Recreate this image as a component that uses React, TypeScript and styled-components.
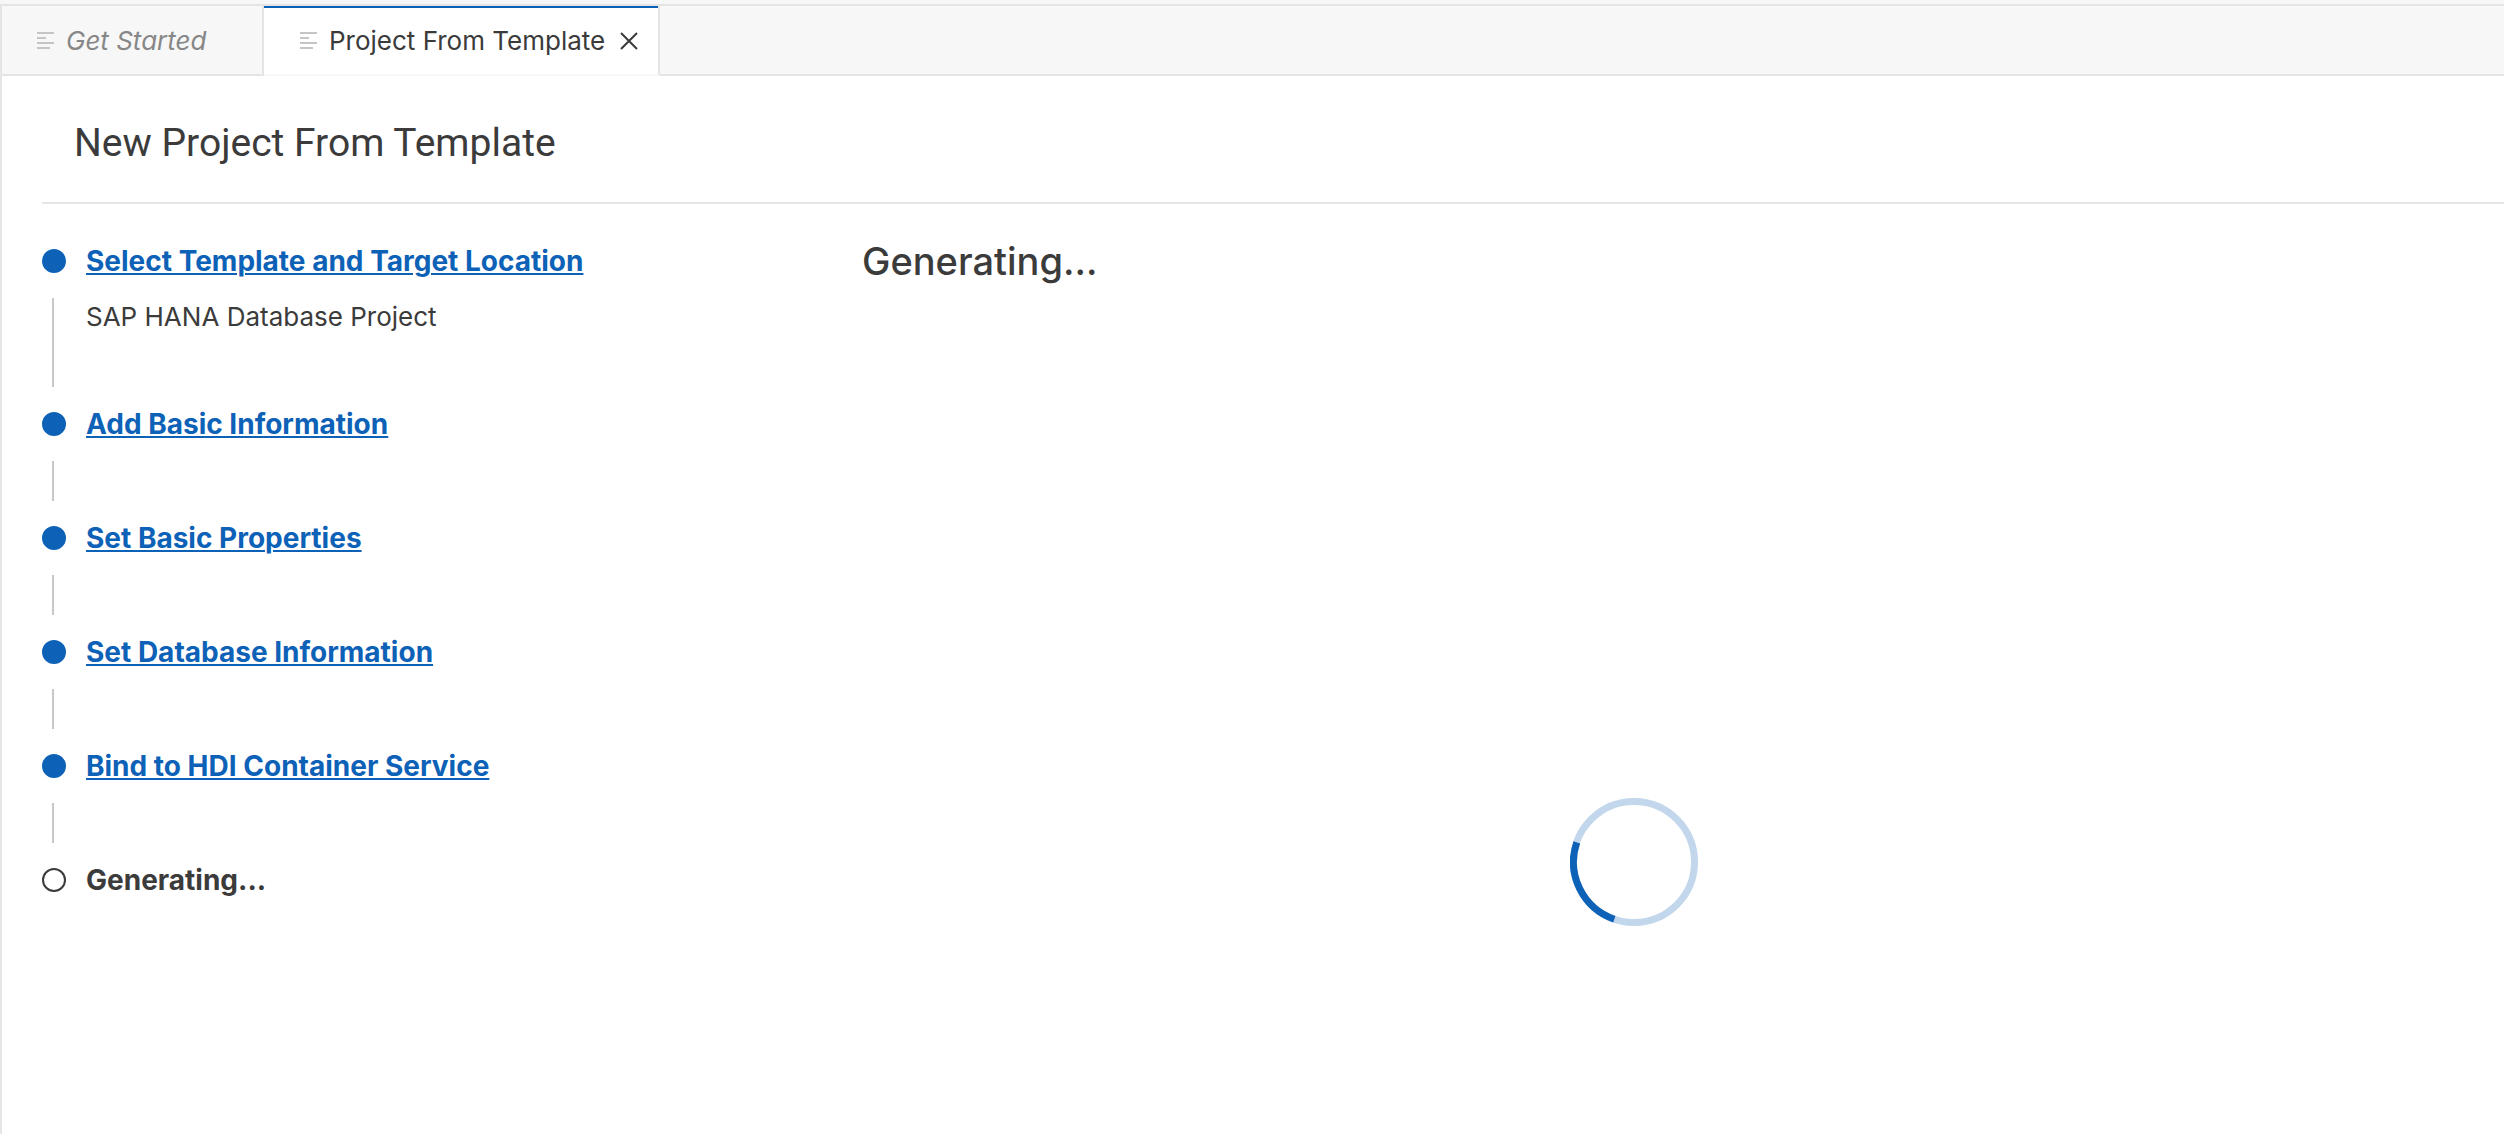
import React from "react";
import styled, { createGlobalStyle, css } from "styled-components";

const color = {
  blue: "#0d62b7",
  blueSoft: "#c2d7ec",
  text: "#3b3b3b",
  muted: "#878787",
  icon: "#c5c5c5",
  border: "#e5e5e5",
  bar: "#f7f7f7",
  line: "#c8c8c8",
};

const GlobalStyle = createGlobalStyle`
  *, *::before, *::after { box-sizing: border-box; }
  body { margin: 0; background: #fff; }
  h1, h2, p, ol { margin: 0; padding: 0; font-weight: inherit; }
`;

const Page = styled.div`
  display: flex;
  flex-direction: column;
  min-height: 100vh;
  color: ${color.text};
  font-family: Inter, "Liberation Sans", sans-serif;
`;

const TopStrip = styled.div`
  height: 4px;
  background: ${color.bar};
`;

const Panel = styled.div`
  display: flex;
  flex: 1;
  flex-direction: column;
  border-top: 2px solid ${color.border};
  border-left: 2px solid ${color.border};
`;

const TabBar = styled.div`
  display: flex;
  height: 70px;
  background: ${color.bar};
`;

const TabFiller = styled.div`
  flex: 1;
  border-bottom: 2px solid ${color.border};
`;

const TabBox = styled.div<{ $active?: boolean }>`
  display: flex;
  align-items: center;
  flex: none;
  border-right: 2px solid ${color.border};
  border-bottom: 2px solid ${color.border};
  ${({ $active }) =>
    $active
      ? css`
          width: 396px;
          padding: 2px 18px 0 36px;
          background: #fff;
          border-bottom-color: ${color.bar};
          box-shadow: inset 0 2px ${color.blue};
        `
      : css`
          width: 262px;
          padding: 2px 0 0 35px;
        `}
`;

const TabButton = styled.button<{ $preview?: boolean }>`
  display: flex;
  align-items: center;
  gap: 12px;
  padding: 0;
  border: 0;
  background: none;
  color: ${({ $preview }) => ($preview ? color.muted : color.text)};
  font: ${({ $preview }) => ($preview ? "italic" : "normal")} 26px/32px Inter, "Liberation Sans", sans-serif;
  white-space: nowrap;
`;

const CloseButton = styled.button`
  display: flex;
  margin-left: auto;
  padding: 2px;
  border: 0;
  background: none;
  color: ${color.text};
`;

const Header = styled.header`
  margin-left: 40px;
  padding: 42px 32px 34px;
  border-bottom: 2px solid ${color.border};
`;

const Title = styled.h1`
  font-family: Roboto, Inter, sans-serif;
  font-size: 39px;
  line-height: 50px;
`;

const Body = styled.div`
  display: grid;
  grid-template-columns: 780px 1fr;
  flex: 1;
  padding: 32px 98px 32px 40px;
  column-gap: 40px;
`;

const Steps = styled.ol`
  list-style: none;
  padding-top: 13px;
`;

const Step = styled.li`
  display: grid;
  grid-template-columns: 24px 1fr;
  grid-template-rows: 24px auto;
  column-gap: 20px;
  align-items: center;
`;

const Dot = styled.span<{ $current?: boolean }>`
  width: 24px;
  height: 24px;
  border: 2px solid ${({ $current }) => ($current ? color.text : color.blue)};
  border-radius: 50%;
  background: ${({ $current }) => ($current ? "#fff" : color.blue)};
`;

const labelStyle = css`
  justify-self: start;
  font-size: 28px;
  font-weight: 700;
  line-height: 24px;
  white-space: nowrap;
`;

const StepLink = styled.a`
  ${labelStyle}
  color: ${color.blue};
  text-decoration: underline 2px;
  text-underline-offset: 2px;
`;

const StepLabel = styled.span`
  ${labelStyle}
`;

const Connector = styled.span<{ $tall?: boolean }>`
  width: 2px;
  height: ${({ $tall }) => ($tall ? 89 : 40)}px;
  margin: 25px 0 25px 10px;
  background: ${color.line};
`;

const Detail = styled.p`
  align-self: start;
  padding-top: 28px;
  font-size: 26px;
  line-height: 32px;
`;

const Content = styled.main`
  display: flex;
  flex-direction: column;
`;

const Heading = styled.h2`
  font-size: 38px;
  font-weight: 500;
  line-height: 50px;
`;

const SpinnerArea = styled.div`
  display: flex;
  justify-content: center;
  padding-top: 512px;
`;

const LinesIcon = () => (
  <svg width="17" height="18" viewBox="0 0 17 18" fill={color.icon} aria-hidden="true">
    <path d="M0 0h17v2H0zM0 5h9v2H0zM0 10h17v2H0zM0 15h13v2H0z" />
  </svg>
);

const CloseIcon = () => (
  <svg width="18" height="18" viewBox="0 0 18 18" stroke="currentColor" strokeWidth="2" aria-hidden="true">
    <path d="M1 1l16 16M17 1L1 17" />
  </svg>
);

const Spinner = () => (
  <svg width="128" height="128" viewBox="0 0 128 128" fill="none" strokeWidth="7" role="img" aria-label="Loading">
    <circle cx="64" cy="64" r="60.5" stroke={color.blueSoft} />
    <path d="M64 124.5A60.5 60.5 0 0 1 3.5 64" stroke={color.blue} transform="rotate(19 64 64)" />
  </svg>
);

const steps = [
  { label: "Select Template and Target Location", detail: "SAP HANA Database Project" },
  { label: "Add Basic Information" },
  { label: "Set Basic Properties" },
  { label: "Set Database Information" },
  { label: "Bind to HDI Container Service" },
];

export default function App() {
  return (
    <>
      <GlobalStyle />
      <Page>
        <TopStrip />
        <Panel>
          <TabBar>
            <TabBox>
              <TabButton type="button" $preview>
                <LinesIcon />
                Get Started
              </TabButton>
            </TabBox>
            <TabBox $active>
              <TabButton type="button">
                <LinesIcon />
                Project From Template
              </TabButton>
              <CloseButton type="button" aria-label="Close tab">
                <CloseIcon />
              </CloseButton>
            </TabBox>
            <TabFiller />
          </TabBar>
          <Header>
            <Title>New Project From Template</Title>
          </Header>
          <Body>
            <Steps>
              {steps.map(({ label, detail }) => (
                <Step key={label}>
                  <Dot />
                  <StepLink href="#">{label}</StepLink>
                  <Connector $tall={Boolean(detail)} />
                  {detail && <Detail>{detail}</Detail>}
                </Step>
              ))}
              <Step aria-current="step">
                <Dot $current />
                <StepLabel>Generating...</StepLabel>
              </Step>
            </Steps>
            <Content>
              <Heading>Generating...</Heading>
              <SpinnerArea>
                <Spinner />
              </SpinnerArea>
            </Content>
          </Body>
        </Panel>
      </Page>
    </>
  );
}
